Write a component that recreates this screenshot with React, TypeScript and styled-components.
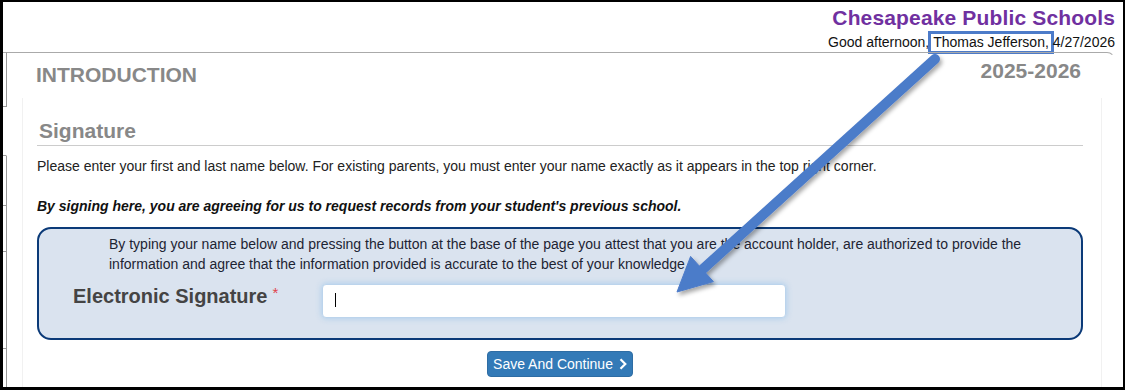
import styled, { createGlobalStyle } from 'styled-components'

const GlobalStyle = createGlobalStyle`
	html, body {
		margin: 0;
		padding: 0;
		background: #fff;
	}
	body {
		font-family: 'Liberation Sans', Arial, sans-serif;
		color: #222;
	}
`

// left nav is mostly hidden by the panel, only its row edges show
const sideRows = [
	{ h: 55, edge: true },
	{ h: 49, edge: false },
	{ h: 50, edge: true },
	{ h: 46, edge: true },
	{ h: 97, edge: true },
	{ h: 40, edge: true },
]

function App() {
	return (
		<>
			<GlobalStyle />
			<Frame>
				<Header>
					<SchoolName>Chesapeake Public Schools</SchoolName>
					<Greeting>
						Good afternoon, <Name>Thomas Jefferson,</Name> 4/27/2026
					</Greeting>
				</Header>
				<Body>
					<Sidebar>
						{sideRows.map((r, i) => (
							<SideRow key={i} $h={r.h} $edge={r.edge} $first={i === 0} />
						))}
					</Sidebar>
					<Panel>
						<PanelHead>
							<PageTitle>INTRODUCTION</PageTitle>
							<Year>2025-2026</Year>
						</PanelHead>
						<Section>
							<SectionTitle>Signature</SectionTitle>
							<Note>
								Please enter your first and last name below. For existing
								parents, you must enter your name exactly as it appears in the
								top right corner.
							</Note>
							<Warning>
								By signing here, you are agreeing for us to request records
								from your student's previous school.
							</Warning>
							<AttestBox>
								<AttestText>
									By typing your name below and pressing the button at the base
									of the page you attest that you are the account holder, are
									authorized to provide the information and agree that the
									information provided is accurate to the best of your
									knowledge.
								</AttestText>
								<FieldRow>
									<FieldLabel>
										Electronic Signature<Req>*</Req>
									</FieldLabel>
									<InputWrap>
										<SigInput type="text" aria-label="Electronic Signature" />
										<Caret />
									</InputWrap>
								</FieldRow>
							</AttestBox>
							<Actions>
								<SaveButton type="button">
									Save And Continue
									<svg width="8" height="12" viewBox="0 0 8 12">
										<path
											d="M1.5 1.2 L6.3 6 L1.5 10.8"
											fill="none"
											stroke="#fff"
											strokeWidth="2.2"
										/>
									</svg>
								</SaveButton>
							</Actions>
						</Section>
					</Panel>
				</Body>
				<Arrow width="1125" height="390" viewBox="0 0 1125 390">
					<defs>
						<filter id="shadow" x="-10%" y="-10%" width="130%" height="130%">
							<feDropShadow
								dx="2"
								dy="3"
								stdDeviation="2"
								floodColor="#000"
								floodOpacity="0.35"
							/>
						</filter>
					</defs>
					<g filter="url(#shadow)" fill="#4c7bc9" stroke="#4c7bc9">
						<line
							x1="935"
							y1="59"
							x2="703"
							y2="269"
							strokeWidth="10"
							strokeLinecap="round"
						/>
						<polygon points="677,292 713.4,281.6 690.6,256.4" strokeWidth="1" />
					</g>
				</Arrow>
			</Frame>
		</>
	)
}
export default App

const Frame = styled.div`
	position: relative;
	box-sizing: border-box;
	width: 1125px;
	height: 390px;
	border-style: solid;
	border-color: #000;
	border-width: 2px 2px 3px 3px;
	overflow: hidden;
	display: flex;
	flex-direction: column;
	background: #fff;
`
const Header = styled.div`
	height: 50px;
	box-sizing: border-box;
	padding: 4px 8px 0 0;
	text-align: right;
`
const SchoolName = styled.div`
	font-size: 21px;
	line-height: 24px;
	font-weight: bold;
	letter-spacing: 0.15px;
	color: #7030a0;
`
const Greeting = styled.div`
	margin-top: 4px;
	font-size: 14px;
	line-height: 17px;
	color: #111;
`
const Name = styled.span`
	display: inline-block;
	line-height: 17px;
	padding: 0 2px;
	margin: 0 -2px;
	border: 3px solid #4c7bc9;
	margin: -3px -5px -3px -5px;
`
const Body = styled.div`
	flex: 1;
	display: flex;
	min-height: 0;
`
const Sidebar = styled.div`
	width: 4px;
	display: flex;
	flex-direction: column;
`
const SideRow = styled.div<{ $h: number; $edge: boolean; $first: boolean }>`
	height: ${({ $h }) => $h}px;
	flex-shrink: 0;
	box-sizing: border-box;
	border-bottom: 1px solid #999;
	border-right: 1px solid ${({ $edge }) => ($edge ? '#999' : 'transparent')};
	border-top: ${({ $first }) => ($first ? '1px solid #aaa' : '0')};
`
const Panel = styled.div`
	flex: 1;
	margin-right: 8px;
	border-top: 1px solid #aaa;
	border-right: 1px solid transparent;
	border-top-right-radius: 8px;
	padding-top: 10px;
	display: flex;
	flex-direction: column;
`
const PanelHead = styled.div`
	display: flex;
	justify-content: space-between;
	align-items: flex-start;
	padding: 0 33px 0 29px;
	font-size: 21px;
	line-height: 24px;
	font-weight: bold;
	color: #888;
`
const PageTitle = styled.div``
const Year = styled.div`
	margin-top: -4px;
`
const Section = styled.div`
	flex: 1;
	margin: 11px 12px 0 15px;
	padding: 21px 18px 0 14px;
	border-left: 1px solid #f1f1f1;
	border-right: 1px solid #f1f1f1;
`
const SectionTitle = styled.div`
	font-size: 21px;
	line-height: 24px;
	font-weight: bold;
	color: #888;
	padding: 0 0 2px 2px;
	border-bottom: 1px solid #ccc;
`
const Note = styled.div`
	margin-top: 10px;
	font-size: 14px;
	line-height: 20px;
`
const Warning = styled.div`
	margin-top: 20px;
	font-size: 14px;
	line-height: 20px;
	font-weight: bold;
	font-style: italic;
	color: #111;
`
const AttestBox = styled.div`
	margin-top: 11px;
	height: 113px;
	box-sizing: border-box;
	border: 2px solid #0b3a78;
	border-radius: 14px;
	background: #dae3ef;
	padding: 5px 40px 0 70px;
`
const AttestText = styled.div`
	font-size: 14px;
	line-height: 20px;
	color: #1d2433;
`
const FieldRow = styled.div`
	display: flex;
	align-items: flex-start;
	margin-top: 10px;
	margin-left: -36px;
`
const FieldLabel = styled.div`
	width: 249px;
	font-size: 20px;
	line-height: 24px;
	font-weight: bold;
	color: #444;
`
const Req = styled.span`
	display: inline-block;
	vertical-align: top;
	margin: -3px 0 0 5px;
	font-size: 15px;
	font-weight: normal;
	color: #e0424a;
`
const InputWrap = styled.div`
	position: relative;
`
const SigInput = styled.input`
	display: block;
	box-sizing: border-box;
	width: 464px;
	height: 34px;
	border: 1px solid #bcd4ec;
	border-radius: 4px;
	background: #fff;
	box-shadow: 0 0 6px rgba(102, 175, 233, 0.45);
	outline: none;
	padding: 0 12px;
	font: 14px 'Liberation Sans', Arial, sans-serif;
`
const Caret = styled.span`
	position: absolute;
	left: 13px;
	top: 9px;
	width: 1px;
	height: 14px;
	background: #000;
`
const Actions = styled.div`
	display: flex;
	justify-content: center;
	margin-top: 11px;
`
const SaveButton = styled.button`
	display: flex;
	align-items: center;
	gap: 6px;
	height: 26px;
	box-sizing: border-box;
	padding: 0 5px 0 5px;
	background: #337ab7;
	border: 1px solid #2e6da4;
	border-radius: 4px;
	color: #fff;
	font: 14px 'Liberation Sans', Arial, sans-serif;
	cursor: pointer;
`
const Arrow = styled.svg`
	position: absolute;
	left: -3px;
	top: -2px;
	pointer-events: none;
`
